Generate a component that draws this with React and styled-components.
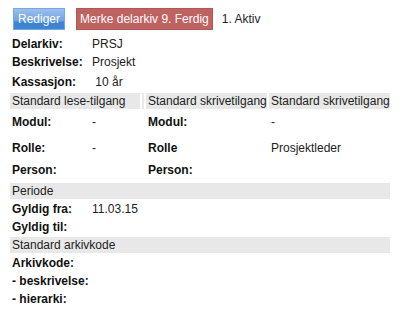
import React from "react";
import styled, { createGlobalStyle } from "styled-components";

const GlobalStyle = createGlobalStyle`
  body {
    margin: 8px;
    background: #fff;
    font-family: "Liberation Sans", Arial, sans-serif;
    font-size: 12px;
    color: #222;
  }
`;

// toolbar
const Toolbar = styled.div`
  display: flex;
  align-items: center;
  gap: 11px;
  height: 22px;
  padding-left: 5px;
`;

const Button = styled.button`
  height: 22px;
  padding: 0 ${(p) => p.pad || "3px"};
  font: inherit;
  font-size: 12px;
  color: #fff;
  cursor: pointer;
  border: 1px solid ${(p) => (p.variant === "danger" ? "#b25755" : "#78a6df")};
  background: ${(p) =>
    p.variant === "danger"
      ? "#c0625f"
      : "linear-gradient(to bottom, #9cc0ee 0%, #6aa1e2 62%, #3b85d7 63%, #3b85d7 100%)"};
`;

const Status = styled.span`
  margin-left: -2px;
  color: #222;
`;

// table
const Grid = styled.table`
  margin-top: 4px;
  width: 384px;
  table-layout: fixed;
  border-collapse: separate;
  border-spacing: 2px;
`;

const Row = styled.tr`
  height: ${(p) => p.h || 16}px;
`;

const Cell = styled.td`
  padding: 0 2px;
  line-height: 16px;
  white-space: nowrap;
  overflow: hidden;
  vertical-align: ${(p) => p.valign || "middle"};
  font-weight: ${(p) => (p.bold ? 700 : 400)};
  color: ${(p) => (p.bold ? "#111" : "#222")};
`;

const Head = styled.td`
  padding: 0 2px;
  height: ${(p) => p.h || 16}px;
  line-height: 16px;
  white-space: nowrap;
  overflow: hidden;
  background: #e8e8e8;
  color: #222;
`;

const Spacer = styled.td`
  padding: 0;
  background: ${(p) => (p.shaded ? "#e8e8e8" : "transparent")};
`;

const Label = (props) => <Cell bold {...props} />;

export default function App() {
  return (
    <>
      <GlobalStyle />
      <Toolbar>
        <Button pad="4px">Rediger</Button>
        <Button variant="danger">Merke delarkiv 9. Ferdig</Button>
        <Status>1. Aktiv</Status>
      </Toolbar>
      <Grid>
        <colgroup>
          <col style={{ width: 78 }} />
          <col style={{ width: 50 }} />
          <col style={{ width: 2 }} />
          <col style={{ width: 121 }} />
          <col style={{ width: 121 }} />
        </colgroup>
        <tbody>
          <Row>
            <Label>Delarkiv:</Label>
            <Cell colSpan={4}>PRSJ</Cell>
          </Row>
          <Row>
            <Label>Beskrivelse:</Label>
            <Cell colSpan={4}>Prosjekt</Cell>
          </Row>
          <Row h={19}>
            <Label>Kassasjon:</Label>
            <Cell colSpan={4}>{"\u00a010 år"}</Cell>
          </Row>
          <Row>
            <Head colSpan={2}>Standard lese-tilgang</Head>
            <Spacer shaded />
            <Head>Standard skrivetilgang</Head>
            <Head>Standard skrivetilgang</Head>
          </Row>
          <Row h={22}>
            <Label>Modul:</Label>
            <Cell>-</Cell>
            <Spacer />
            <Label>Modul:</Label>
            <Cell>-</Cell>
          </Row>
          <Row h={25}>
            <Label>Rolle:</Label>
            <Cell>-</Cell>
            <Spacer />
            <Label>Rolle</Label>
            <Cell>Prosjektleder</Cell>
          </Row>
          <Row h={19}>
            <Label valign="top">Person:</Label>
            <Cell valign="top" />
            <Spacer />
            <Label valign="top">Person:</Label>
            <Cell valign="top" />
          </Row>
          <Row h={15}>
            <Head colSpan={5} h={15}>Periode</Head>
          </Row>
          <Row>
            <Label>Gyldig fra:</Label>
            <Cell colSpan={4}>11.03.15</Cell>
          </Row>
          <Row>
            <Label>Gyldig til:</Label>
            <Cell colSpan={4} />
          </Row>
          <Row h={15}>
            <Head colSpan={5} h={15}>Standard arkivkode</Head>
          </Row>
          <Row>
            <Label>Arkivkode:</Label>
            <Cell colSpan={4} />
          </Row>
          <Row>
            <Label>- beskrivelse:</Label>
            <Cell colSpan={4} />
          </Row>
          <Row>
            <Label>- hierarki:</Label>
            <Cell colSpan={4} />
          </Row>
        </tbody>
      </Grid>
    </>
  );
}
